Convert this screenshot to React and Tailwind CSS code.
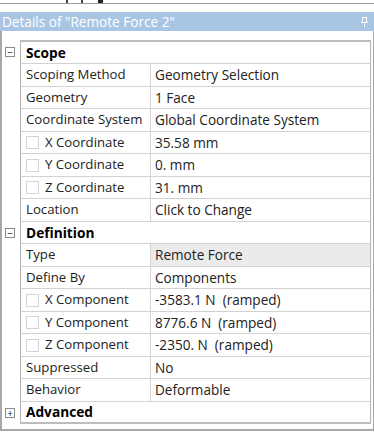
const rows = [
  { section: 'Scope', box: '−' },
  { label: 'Scoping Method', value: 'Geometry Selection' },
  { label: 'Geometry', value: '1 Face' },
  { label: 'Coordinate System', value: 'Global Coordinate System' },
  { label: 'X Coordinate', value: '35.58 mm', check: true },
  { label: 'Y Coordinate', value: '0. mm', check: true },
  { label: 'Z Coordinate', value: '31. mm', check: true },
  { label: 'Location', value: 'Click to Change' },
  { section: 'Definition', box: '−' },
  { label: 'Type', value: 'Remote Force', shaded: true },
  { label: 'Define By', value: 'Components' },
  { label: 'X Component', value: '-3583.1 N  (ramped)', check: true },
  { label: 'Y Component', value: '8776.6 N  (ramped)', check: true },
  { label: 'Z Component', value: '-2350. N  (ramped)', check: true },
  { label: 'Suppressed', value: 'No' },
  { label: 'Behavior', value: 'Deformable' },
  { section: 'Advanced', box: '+' },
]

function Row({ row, i }) {
  const h = i % 2 === 0 ? 'h-[22px]' : 'h-[23px]'
  const first = i === 0
  const last = i === rows.length - 1
  return (
    <div className={`flex ${h} ${first ? 'h-[24px]' : ''}`}>
      <div className="w-[20px] flex items-center justify-center shrink-0">
        {row.box && (
          <div className="w-[10px] h-[10px] border border-[#8a8a8a] bg-white flex items-center justify-center text-[10px] leading-none text-[#222]">
            {row.box}
          </div>
        )}
      </div>
      <div
        className={`flex w-[351px] border-l border-r border-[#b4b4b4] ${first ? 'border-t-2 border-t-[#bcbcbc]' : ''} ${last ? 'border-b-2 border-b-[#bdbdbd]' : 'border-b border-b-[#d2d2d2]'}`}
      >
        {row.section ? (
          <div className="flex items-center pl-[5px] font-bold text-black text-[13.7px]">{row.section}</div>
        ) : (
          <>
            <div className="w-[130px] shrink-0 flex items-center pl-[5px] border-r border-[#d2d2d2] text-[#222] text-[13.2px]">
              {row.check && <div className="w-[13px] h-[13px] border border-[#d4d4d4] bg-white mr-[6px]" />}
              {row.label}
            </div>
            <div className={`flex-1 flex items-center pl-[4px] text-[#222] whitespace-pre ${row.shaded ? 'bg-[#ebebeb]' : ''}`}>
              {row.value}
            </div>
          </>
        )}
      </div>
    </div>
  )
}

export default function App() {
  return (
    <div
      className="w-[374px] h-[435px] bg-white overflow-hidden relative text-[13.6px] leading-none"
      style={{ fontFamily: '"Open Sans", "Noto Sans", sans-serif' }}
    >
      <div className="h-[12px] relative">
        <div className="absolute top-[3px] left-0 right-0 h-px bg-[#9a9a9a]" />
        <div className="absolute top-0 left-[66px] w-[2px] h-[3px] bg-[#444]" />
        <div className="absolute top-0 left-[81px] w-[2px] h-[3px] bg-[#444]" />
        <div className="absolute top-0 left-[98px] w-[5px] h-[3px] bg-[#222]" />
      </div>
      <div className="h-[19px] bg-[#a9c5e4] flex items-center justify-between pl-[2px] pr-[6px]">
        <span className="text-white">Details of "Remote Force 2"</span>
        <svg width="7" height="10" viewBox="0 0 7 10">
          <rect x="1.5" y="0.5" width="4" height="5" fill="none" stroke="#fff" />
          <line x1="0" y1="5.5" x2="7" y2="5.5" stroke="#fff" />
          <line x1="3.5" y1="6" x2="3.5" y2="10" stroke="#fff" />
        </svg>
      </div>
      <div className="border-l-2 border-b-2 border-r border-[#a8a8a8] h-[400px]">
        <div className="h-[9px]" />
        <div className="-ml-[2px]">
          {rows.map((r, i) => (
            <Row key={i} row={r} i={i} />
          ))}
        </div>
      </div>
    </div>
  )
}
